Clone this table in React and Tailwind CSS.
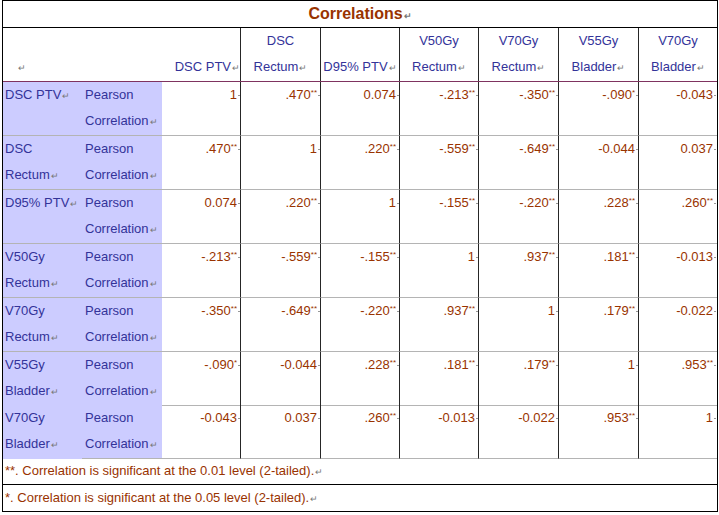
import React from "react";

const cols = "grid grid-cols-[79px_80px_79px_80px_79px_79px_80px_80px_78px]";

const headers = [
  ["", "DSC PTV"],
  ["DSC", "Rectum"],
  ["", "D95% PTV"],
  ["V50Gy", "Rectum"],
  ["V70Gy", "Rectum"],
  ["V55Gy", "Bladder"],
  ["V70Gy", "Bladder"],
];

const rows = [
  { label: ["DSC PTV"], h: "h-[54px]", vals: ["1", ".470**", "0.074", "-.213**", "-.350**", "-.090*", "-0.043"] },
  { label: ["DSC", "Rectum"], h: "h-[54px]", vals: [".470**", "1", ".220**", "-.559**", "-.649**", "-0.044", "0.037"] },
  { label: ["D95% PTV"], h: "h-[54px]", vals: ["0.074", ".220**", "1", "-.155**", "-.220**", ".228**", ".260**"] },
  { label: ["V50Gy", "Rectum"], h: "h-[54px]", vals: ["-.213**", "-.559**", "-.155**", "1", ".937**", ".181**", "-0.013"] },
  { label: ["V70Gy", "Rectum"], h: "h-[54px]", vals: ["-.350**", "-.649**", "-.220**", ".937**", "1", ".179**", "-0.022"] },
  { label: ["V55Gy", "Bladder"], h: "h-[53px]", vals: ["-.090*", "-0.044", ".228**", ".181**", ".179**", "1", ".953**"] },
  { label: ["V70Gy", "Bladder"], h: "h-[53px]", vals: ["-0.043", "0.037", ".260**", "-0.013", "-0.022", ".953**", "1"] },
];

function Ret() {
  return <span className="text-[9px] text-[#777] ml-px">↵</span>;
}

function Mark() {
  return <span className="inline-block w-[2px] h-px bg-[#999] ml-px align-middle" />;
}

function Value({ v }) {
  const stars = v.match(/\*+$/);
  const num = stars ? v.slice(0, -stars[0].length) : v;
  return (
    <span className="whitespace-nowrap">
      {num}
      {stars && <sup className="text-[8px] text-[#993300]">{stars[0]}</sup>}
      <Mark />
    </span>
  );
}

export default function App() {
  return (
    <div className="w-[719px] h-[515px] bg-white font-['Liberation_Sans',Arial,sans-serif] text-[13px] leading-[26px]">
      <div className="ml-[2px] w-[716px] border border-black">
        {/* title */}
        <div className="h-[27px] border-b border-black text-center text-[16px] font-bold text-[#993300] leading-[26px]">
          Correlations
          <Ret />
        </div>

        {/* header */}
        <div className={`${cols} h-[54px] border-b border-[#7f3360] text-[#333399]`}>
          <div className="flex items-end pl-[14px]">
            <Ret />
          </div>
          <div />
          {headers.map(([a, b], i) => (
            <div
              key={i}
              className={`flex flex-col justify-end whitespace-nowrap ${i === 0 ? "items-end" : "items-center"} ${
                i < 6 ? "border-r border-[#262626]" : ""
              }`}
            >
              {a && <div>{a}</div>}
              <div>
                {b}
                <Ret />
              </div>
            </div>
          ))}
        </div>

        {/* data rows */}
        {rows.map((r, ri) => {
          const last = ri === rows.length - 1;
          return (
            <div key={ri} className={`${cols} ${r.h}`}>
              <div
                className={`bg-[#ccccff] pl-[2px] text-[#333399] whitespace-nowrap ${
                  last ? "" : "border-b border-[#b4b4b4]"
                }`}
              >
                {r.label.map((t, k) => (
                  <div key={k}>
                    {t}
                    {k === r.label.length - 1 && <Ret />}
                  </div>
                ))}
              </div>
              <div className="bg-[#ccccff] pl-[3px] text-[#333399] border-b border-[#b4b4b4] whitespace-nowrap">
                <div>Pearson</div>
                <div>
                  Correlation
                  <Ret />
                </div>
              </div>
              {r.vals.map((v, i) => (
                <div
                  key={i}
                  className={`text-right text-[#993300] border-b border-[#b4b4b4] ${
                    i < 6 ? "border-r border-r-[#262626]" : "pr-px"
                  }`}
                >
                  <Value v={v} />
                </div>
              ))}
            </div>
          );
        })}

        {/* footnotes */}
        <div className="h-[27px] border-b border-black pl-[2px] text-[#993300]">
          **. Correlation is significant at the 0.01 level (2-tailed).
          <Ret />
        </div>
        <div className="h-[26px] pl-[2px] text-[#993300]">
          *. Correlation is significant at the 0.05 level (2-tailed).
          <Ret />
        </div>
      </div>
    </div>
  );
}
